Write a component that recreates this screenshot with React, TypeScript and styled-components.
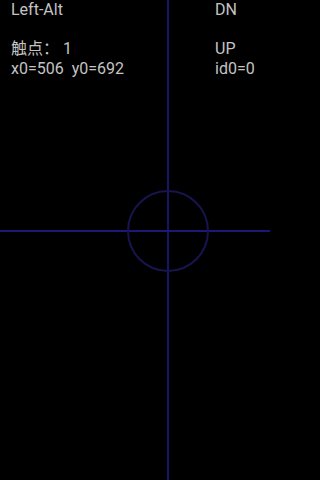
import React from 'react'
import styled, { createGlobalStyle } from 'styled-components'

const GlobalStyle = createGlobalStyle`
  html, body {
    margin: 0;
    padding: 0;
    background: #000;
  }
`

const touch = { x: 168, y: 231, r: 40 }

const rows: [string, string][] = [
  ['Left-Alt', 'DN'],
  ['', ''],
  ['触点： 1', 'UP'],
  ['x0=506  y0=692', 'id0=0'],
]

const App: React.FC = () => {
  return (
    <Screen>
      <GlobalStyle />
      <Crosshair width="270" height="480" viewBox="0 0 270 480">
        <line x1={touch.x} y1="0" x2={touch.x} y2="480" stroke="#191566" strokeWidth="2" />
        <line x1="0" y1={touch.y} x2="270" y2={touch.y} stroke="#1d1878" strokeWidth="2" />
        <circle cx={touch.x} cy={touch.y} r={touch.r} fill="none" stroke="#17144f" strokeWidth="2" />
      </Crosshair>
      <Info>
        {rows.map(([left, right], i) => (
          <React.Fragment key={i}>
            <Cell>{left || '\u00a0'}</Cell>
            <Cell>{right || '\u00a0'}</Cell>
          </React.Fragment>
        ))}
      </Info>
    </Screen>
  )
}

const Screen = styled.div`
  position: relative;
  width: 270px;
  height: 480px;
  background: #000;
  overflow: hidden;
`

const Crosshair = styled.svg`
  position: absolute;
  top: 0;
  left: 0;
`

const Info = styled.div`
  position: relative;
  display: grid;
  grid-template-columns: 204px 1fr;
  padding-left: 11px;
`

const Cell = styled.div`
  font-family: Roboto, 'Noto Sans CJK SC', sans-serif;
  font-size: 16px;
  line-height: 19.5px;
  color: #c4c4c4;
  white-space: pre;
`

export default App
